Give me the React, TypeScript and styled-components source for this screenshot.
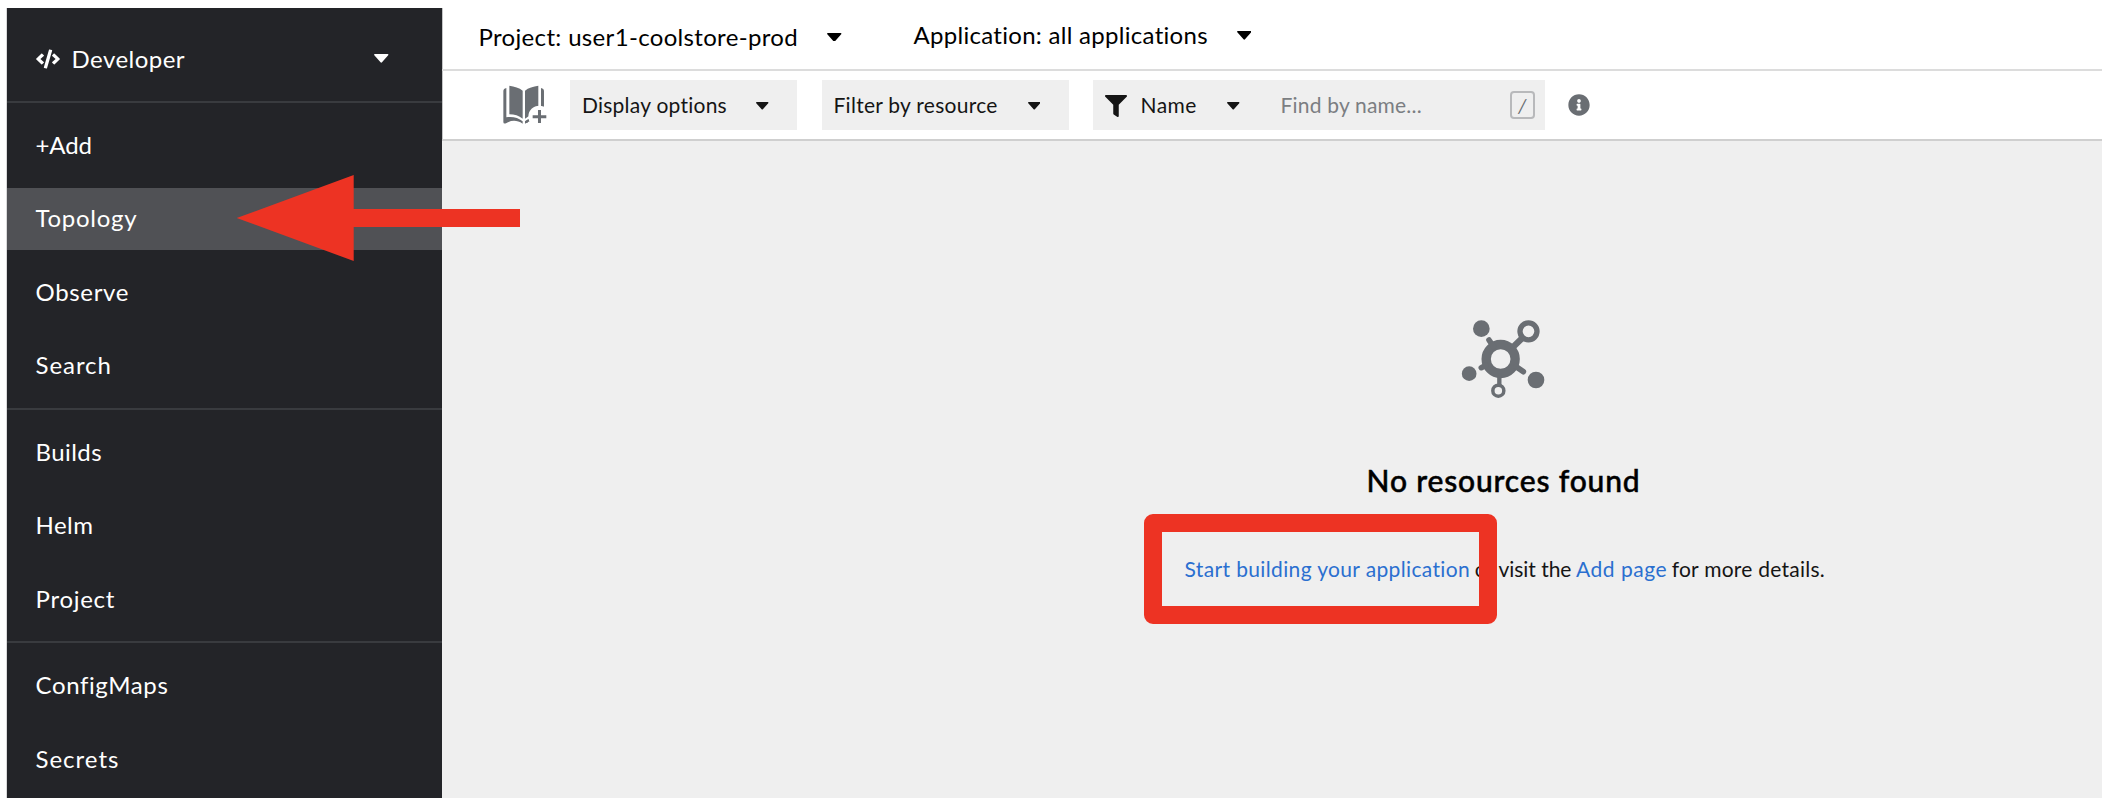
import React from "react";
import styled, { createGlobalStyle, css } from "styled-components";
import { FaCode, FaFilter, FaInfoCircle } from "react-icons/fa";

const GlobalStyle = createGlobalStyle`
  *, *::before, *::after { box-sizing: border-box; }
  body {
    margin: 0;
    background: #fff;
    color: #151515;
    font-family: Lato, "Liberation Sans", sans-serif;
  }
`;

const Page = styled.div`
  position: relative;
  display: flex;
  width: 2108px;
  height: 804px;
  padding: 8px 6px 6.5px 7px;
  overflow: hidden;
`;

/* Letter-spaced text run; every label carries its own tracking. */
const Label = styled.span<{ $track?: number }>`
  letter-spacing: ${(p) => p.$track ?? 0}px;
  white-space: nowrap;
`;

const Sidebar = styled.nav`
  flex: none;
  width: 434.5px;
  background: #232428;
  color: #fff;
  font-size: 24px;
  box-shadow: -1px 0 0 #d9d9da, 1px 0 0 #c4c5c6;
`;

const Perspective = styled.button`
  display: flex;
  align-items: center;
  width: 100%;
  height: 93px;
  padding: 8px 53px 0 29px;
  border: 0;
  background: none;
  color: inherit;
  font: inherit;
  text-align: left;

  ${Label} {
    flex: 1;
    margin-left: 11.5px;
  }
`;

const NavGroup = styled.ul`
  display: flex;
  flex-direction: column;
  gap: 12px;
  margin: 0;
  padding: 12px 0 11.5px;
  border-top: 2px solid #393b3f;
  list-style: none;
`;

const NavItem = styled.li<{ $active?: boolean }>`
  display: flex;
  align-items: center;
  height: 61.33px;
  padding: 0 0 2px 28.5px;
  ${(p) => p.$active && css`background: #505155;`}
`;

const Main = styled.main`
  display: flex;
  flex: 1;
  flex-direction: column;
  min-width: 0;
`;

const ContextBar = styled.header`
  display: flex;
  align-items: flex-start;
  height: 62.5px;
  padding-left: 37px;
  border-bottom: 2px solid #dcdcdc;
  color: #000;
  font-size: 24px;
`;

const ContextToggle = styled.div<{ $top: number }>`
  display: flex;
  align-items: center;
  gap: 29px;
  height: 34px;
  margin-top: ${(p) => p.$top}px;

  & + & { margin-left: 72px; }

  ${Label} {
    margin-bottom: 2px;
  }
`;

const Toolbar = styled.div`
  display: flex;
  align-items: center;
  height: 70px;
  padding: 1px 0 0 61px;
  border-bottom: 2px solid #cfcfcf;
  font-size: 21px;

  ${Label} {
    margin-bottom: 1px;
  }
`;

const Control = styled.div<{ $width: number; $left: number }>`
  display: flex;
  align-items: center;
  justify-content: space-between;
  width: ${(p) => p.$width}px;
  height: 50px;
  margin-left: ${(p) => p.$left}px;
  padding: 0 28.5px 0 12px;
  background: #efefef;

  > svg { margin-top: 2px; }
`;

const SearchControl = styled(Control)`
  justify-content: flex-start;
  padding: 0 10px 0 12px;
`;

const NameLabel = styled(Label)`
  width: 86.5px;
  margin-left: 13.5px;
`;

const Placeholder = styled(Label)`
  flex: 1;
  margin-left: 41px;
  color: #7b7e82;
`;

const KeyHint = styled.kbd`
  display: flex;
  align-items: center;
  justify-content: center;
  width: 24.5px;
  height: 28.5px;
  border: 2px solid #b8b9bb;
  border-radius: 4px;
  color: #6a6e73;
  font: italic 20px Lato, sans-serif;
`;

const InfoIcon = styled(FaInfoCircle)`
  margin-left: 23px;
  color: #6a6e73;
`;

const Canvas = styled.section`
  flex: 1;
  padding: 178px 0 0 465px;
  background: #efefef;
`;

const EmptyState = styled.div`
  display: flex;
  flex-direction: column;
  align-items: center;
  width: 1194px;
`;

const Title = styled.h1`
  margin: 60px 0 0;
  color: #000;
  font-size: 30px;
  font-weight: 500;
  line-height: 40px;
  -webkit-text-stroke: 0.5px #000;
`;

const Message = styled.p`
  display: flex;
  gap: 4.5px;
  margin: 52.5px 0 0 2.5px;
  font-size: 21px;
  line-height: 32px;
`;

const Link = styled(Label)`
  color: #2b6fd0;
`;

const Highlight = styled.div`
  position: absolute;
  left: 1144px;
  top: 514px;
  width: 353px;
  height: 110px;
  border: 18px solid #ed3323;
  border-radius: 9px;
`;

const Arrow = styled.svg`
  position: absolute;
  left: 236px;
  top: 174px;
`;

function Caret({ size = 14 }: { size?: number }) {
  return (
    <svg width={size} height={size * 0.6} viewBox="0 0 14 8.4" fill="currentColor">
      <path d="M.8 0H13.2C13.9 0 14.2.8 13.7 1.3L7.7 8C7.3 8.5 6.7 8.5 6.3 8L.3 1.3C-.2.8.1 0 .8 0Z" />
    </svg>
  );
}

function CatalogIcon() {
  return (
    <svg width="44" height="39.3" viewBox="38 46 132 118" fill="#6a6e73">
      <path d="M57 48C72 50 87 54 97 63V147C86 138 72 134 57 134Z" />
      <path d="M104 63C114 54 129 50 144 48V134C130 134 115 138 104 147Z" />
      <path d="M48 55V143C66 140 84 144 97 155V162C80 151 63 151 47 161Q39 164 39 157V64Q39 57 48 55Z" />
      <path d="M152 55V143C134 140 117 144 104 155V162C120 151 137 151 153 161Q161 164 161 157V64Q161 57 152 55Z" />
      <circle cx="147" cy="141" r="33" fill="#fff" />
      <path d="M104 155L113 150L116 152L112 159L105 161Z" />
      <path d="M127 141H168M147.500 121V160" stroke="#6a6e73" strokeWidth="9" />
    </svg>
  );
}

function TopologyIcon() {
  return (
    <svg width="86.667" height="81.667" viewBox="90 55 260 245" fill="#6a6e73">
      <g fill="none" stroke="#6a6e73" strokeLinecap="round">
        <circle cx="212" cy="175" r="43.500" strokeWidth="28" />
        <circle cx="295.500" cy="92" r="25.500" strokeWidth="16" />
        <circle cx="205" cy="270" r="16.500" strokeWidth="10.500" />
        <path d="M177 118L190 137M154 201L168 194M280 213L258 198" strokeWidth="17" />
        <path d="M250 138L277 112" strokeWidth="19" />
        <path d="M208 226V252" strokeWidth="13" />
      </g>
      <circle cx="154" cy="84" r="25" />
      <circle cx="117.500" cy="219" r="22" />
      <circle cx="318" cy="238" r="25" />
    </svg>
  );
}

type NavEntry = { name: string; track: number; active?: boolean };

const navGroups: NavEntry[][] = [
  [
    { name: "+Add", track: -0.1 },
    { name: "Topology", track: 0.72, active: true },
    { name: "Observe", track: 0.68 },
    { name: "Search", track: 0.95 },
  ],
  [
    { name: "Builds", track: 0.45 },
    { name: "Helm", track: 0.5 },
    { name: "Project", track: 0.73 },
  ],
  [
    { name: "ConfigMaps", track: 0.62 },
    { name: "Secrets", track: 1 },
  ],
];

export default function App() {
  return (
    <Page>
      <GlobalStyle />
      <Sidebar>
        <Perspective>
          <FaCode size={24} />
          <Label $track={0.46}>Developer</Label>
          <Caret size={14.5} />
        </Perspective>
        {navGroups.map((group) => (
          <NavGroup key={group[0].name}>
            {group.map((item) => (
              <NavItem key={item.name} $active={item.active}>
                <Label $track={item.track}>{item.name}</Label>
              </NavItem>
            ))}
          </NavGroup>
        ))}
      </Sidebar>

      <Main>
        <ContextBar>
          <ContextToggle $top={12}>
            <Label $track={0.33}>Project: user1-coolstore-prod</Label>
            <Caret size={14.5} />
          </ContextToggle>
          <ContextToggle $top={10.5}>
            <Label $track={0.29}>Application: all applications</Label>
            <Caret size={14.5} />
          </ContextToggle>
        </ContextBar>

        <Toolbar>
          <CatalogIcon />
          <Control $width={227} $left={23.5}>
            <Label $track={0.24}>Display options</Label>
            <Caret size={12.5} />
          </Control>
          <Control $width={247} $left={24.5}>
            <Label $track={0.27}>Filter by resource</Label>
            <Caret size={12.5} />
          </Control>
          <SearchControl $width={451.5} $left={24.5}>
            <FaFilter size={22} />
            <NameLabel $track={0.42}>Name</NameLabel>
            <Caret size={12.5} />
            <Placeholder $track={0.2}>Find by name...</Placeholder>
            <KeyHint>/</KeyHint>
          </SearchControl>
          <InfoIcon size={22} />
        </Toolbar>

        <Canvas>
          <EmptyState>
            <TopologyIcon />
            <Title>
              <Label $track={0.83}>No resources found</Label>
            </Title>
            <Message>
              <Link $track={0.36}>Start building your application</Link>
              <Label $track={-0.04}>or visit the</Label>
              <Link $track={0.55}>Add page</Link>
              <Label $track={0.24}>for more details.</Label>
            </Message>
          </EmptyState>
        </Canvas>
      </Main>

      <Highlight />
      <Arrow width="285" height="88" viewBox="236 174 285 88" fill="#ed3323">
        <path d="M236.700 218L353.700 175V209H520V227H353.700V261Z" />
      </Arrow>
    </Page>
  );
}
